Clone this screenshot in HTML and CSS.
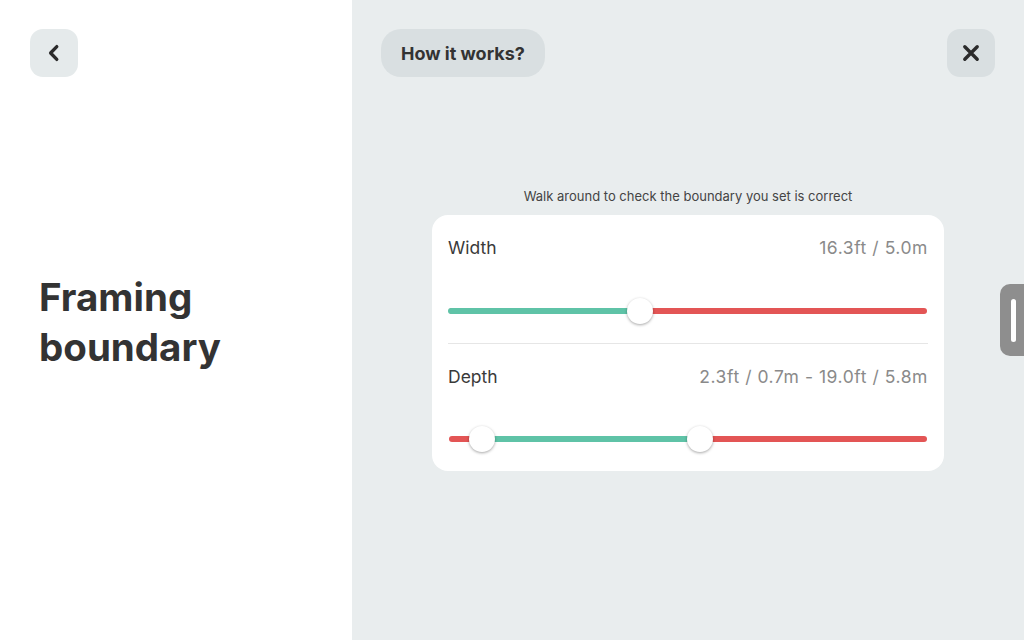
FILE: index.html
```html
<!DOCTYPE html>
<html lang="en">
<head>
<meta charset="utf-8">
<title>Framing boundary</title>
<link rel="stylesheet" href="styles.css">
</head>
<body>
<div class="app">
  <aside class="left">
    <button class="icon-btn back" aria-label="Back">
      <svg width="20" height="20" viewBox="0 0 20 20"><path d="M12.8 3.6 L6.6 10 L12.8 16.4" fill="none" stroke="#2b2b2b" stroke-width="3.3" stroke-linecap="round" stroke-linejoin="round"/></svg>
    </button>
    <h1 class="title">Framing<br>boundary</h1>
  </aside>
  <main class="right">
    <div class="topbar">
      <button class="pill">How it works?</button>
      <button class="icon-btn close" aria-label="Close">
        <svg width="20" height="20" viewBox="0 0 20 20"><path d="M3.8 3.8 L16.2 16.2 M16.2 3.8 L3.8 16.2" fill="none" stroke="#2b2b2b" stroke-width="3.4" stroke-linecap="round"/></svg>
      </button>
    </div>
    <p class="caption">Walk around to check the boundary you set is correct</p>
    <section class="card">
      <div class="row first">
        <div class="row-head"><span class="label">Width</span><span class="value">16.3ft / 5.0m</span></div>
        <div class="slider">
          <div class="track red"></div>
          <div class="fill green" style="left:0%;width:40%"></div>
          <div class="thumb" style="left:40%"></div>
        </div>
      </div>
      <div class="divider"></div>
      <div class="row second">
        <div class="row-head"><span class="label">Depth</span><span class="value">2.3ft / 0.7m - 19.0ft / 5.8m</span></div>
        <div class="slider">
          <div class="track red"></div>
          <div class="fill green" style="left:7.1%;width:45.4%"></div>
          <div class="thumb" style="left:7.1%"></div>
          <div class="thumb" style="left:52.5%"></div>
        </div>
      </div>
    </section>
    <div class="handle"><span class="handle-bar"></span></div>
  </main>
</div>
</body>
</html>
```
FILE: styles.css
```css
* { box-sizing: border-box; }
html, body { margin: 0; padding: 0; }
body {
  width: 1024px;
  height: 640px;
  overflow: hidden;
  font-family: Inter, "Liberation Sans", Arial, sans-serif;
  color: #333;
  background: #fff;
}
.app { display: flex; width: 1024px; height: 640px; }
.left {
  width: 352px;
  background: #fff;
  padding: 29px 30px;
  display: flex;
  flex-direction: column;
  align-items: flex-start;
}
button { font-family: inherit; border: 0; cursor: pointer; padding: 0; }
.icon-btn {
  width: 48px;
  height: 48px;
  border-radius: 13px;
  display: flex;
  align-items: center;
  justify-content: center;
}
.back { background: #e5eaeb; }
.close { background: #d9dfe1; }
.title {
  margin: 195px 0 0 9px;
  font-size: 38.5px;
  line-height: 50px;
  font-weight: 700;
  letter-spacing: 0;
  color: #333;
}
.right {
  flex: 1;
  background: #e9edee;
  padding: 29px 29px;
  position: relative;
  display: flex;
  flex-direction: column;
  align-items: center;
}
.topbar {
  align-self: stretch;
  display: flex;
  justify-content: space-between;
  align-items: center;
}
.pill {
  height: 48px;
  padding: 0 20px;
  border-radius: 20px;
  background: #d9dfe1;
  font-size: 18px;
  font-weight: 700;
  color: #333;
}
.caption {
  margin: 111px 0 0;
  font-size: 13px;
  line-height: 16px;
  color: #444;
}
.card {
  margin-top: 11px;
  width: 512px;
  background: #fff;
  border-radius: 16px;
  padding: 0 16px;
}
.row.first { padding: 20px 0 19px; }
.row.second { padding: 20px 0 19px; }
.row-head {
  display: flex;
  justify-content: space-between;
  align-items: center;
  height: 24px;
}
.label { font-size: 17.5px; color: #3a3a3a; }
.value { font-size: 17.5px; letter-spacing: 0.55px; color: #8a8a8a; }
.first .slider { margin-top: 39px; }
.second .slider { margin-top: 38px; }
.slider {
  position: relative;
  height: 26px;
}
.track, .fill {
  position: absolute;
  top: 10px;
  height: 6px;
  border-radius: 3px;
}
.track { left: 1px; right: 1px; }
.red { background: #e35555; }
.green { background: #5fc3a7; }
.thumb {
  position: absolute;
  top: 0;
  width: 26px;
  height: 26px;
  margin-left: -13px;
  border-radius: 50%;
  background: #fff;
  box-shadow: 0 1px 3px rgba(0,0,0,0.35);
}
.divider { height: 1px; background: #e6e6e6; }
.handle {
  position: absolute;
  right: 0;
  top: 284px;
  width: 24px;
  height: 72px;
  background: #8e8e8e;
  border-radius: 10px 0 0 10px;
  display: flex;
  align-items: center;
  padding-left: 11px;
}
.handle-bar {
  width: 5px;
  height: 43px;
  border-radius: 3px;
  background: #fff;
}
```
